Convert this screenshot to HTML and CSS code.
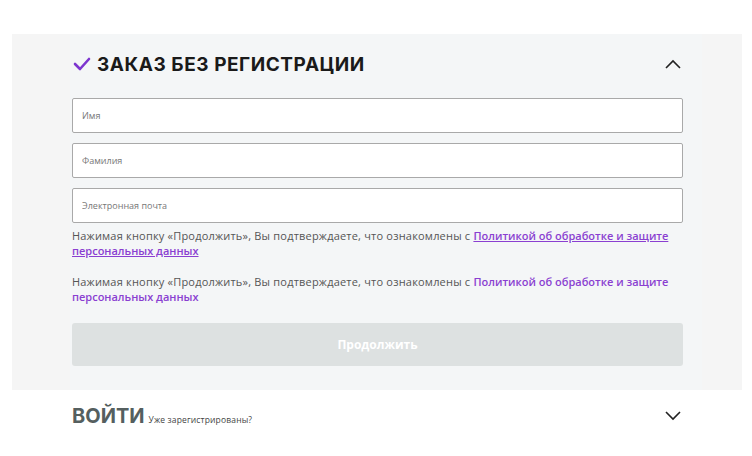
FILE: index.html
```html
<!DOCTYPE html>
<html lang="ru">
<head>
    <meta charset="UTF-8">
    <meta name="viewport" content="width=device-width, initial-scale=1.0">
    <title>Оформление заказа</title>
    <link rel="stylesheet" href="styles.css">
</head>
<body>
    <div class="checkout">
        <div class="section-open">
            <div class="section-inner">
                <div class="section-head">
                    <div class="section-title">
                        <svg class="check" width="18" height="14" viewBox="0 0 18 14">
                            <polyline points="2,7 7,12 16,2" fill="none" stroke="#7d35cf" stroke-width="2.6" stroke-linecap="round" stroke-linejoin="round"/>
                        </svg>
                        <span>ЗАКАЗ БЕЗ РЕГИСТРАЦИИ</span>
                    </div>
                    <svg class="chevron" width="16" height="10" viewBox="0 0 16 10">
                        <polyline points="1,9 8,2 15,9" fill="none" stroke="#222" stroke-width="1.6"/>
                    </svg>
                </div>

                <form class="guest-form">
                    <input type="text" placeholder="Имя">
                    <input type="text" placeholder="Фамилия">
                    <input type="email" placeholder="Электронная почта">

                    <p class="agree">Нажимая кнопку «Продолжить», Вы подтверждаете, что ознакомлены с <a href="#" class="underline">Политикой об обработке и защите персональных данных</a></p>
                    <p class="agree">Нажимая кнопку «Продолжить», Вы подтверждаете, что ознакомлены с <a href="#">Политикой об обработке и защите персональных данных</a></p>

                    <button type="button" class="btn-continue" disabled>Продолжить</button>
                </form>
            </div>
        </div>

        <div class="section-closed">
            <div class="login-title">
                <span class="login-big">ВОЙТИ</span>
                <span class="login-small">Уже зарегистрированы?</span>
            </div>
            <svg class="chevron" width="16" height="10" viewBox="0 0 16 10">
                <polyline points="1,1 8,8 15,1" fill="none" stroke="#222" stroke-width="1.6"/>
            </svg>
        </div>
    </div>
</body>
</html>
```

FILE: styles.css
```css
body {
    margin: 0;
    background-color: #fff;
    font-family: "Open Sans", "Liberation Sans", sans-serif;
    color: #555;
}

.checkout {
    padding-top: 34px;
}

.section-open {
    margin-left: 12px;
    width: 730px;
    background-color: #f5f5f5;
}

.section-inner {
    margin-left: 58px;
    width: 630px;
    padding: 16px 0 24px 2px;
    background-color: #f4f6f7;
}

.section-head {
    display: flex;
    justify-content: space-between;
    align-items: center;
    width: 611px;
    height: 28px;
    margin-bottom: 20px;
}

.section-title {
    display: flex;
    align-items: center;
    gap: 6px;
    font-family: "Inter", sans-serif;
    font-weight: 700;
    font-size: 19px;
    letter-spacing: 0.55px;
    color: #1a1a1a;
}

.check {
    margin-left: 1px;
}

.chevron {
    margin-right: 2px;
}

.guest-form {
    width: 611px;
    display: flex;
    flex-direction: column;
}

.guest-form input {
    height: 35px;
    margin-bottom: 10px;
    padding: 0 9px;
    border: 1px solid #a9a9a9;
    border-radius: 2px;
    background-color: #fff;
    font-family: "Open Sans", sans-serif;
    font-size: 9px;
    box-sizing: border-box;
}

.guest-form input:last-of-type {
    margin-bottom: 5px;
}

.guest-form input::placeholder {
    color: #777;
}

.agree {
    margin: 0 0 16px 0;
    font-size: 11px;
    line-height: 15px;
    letter-spacing: 0.2px;
    color: #555;
}

.agree a {
    color: #8a3fd1;
    font-weight: 600;
    letter-spacing: 0;
    text-decoration: none;
}

.agree a.underline {
    text-decoration: underline;
}

.btn-continue {
    height: 43px;
    margin-top: 3px;
    border: none;
    border-radius: 3px;
    background-color: #dde1e1;
    color: #fff;
    font-family: "Open Sans", sans-serif;
    font-weight: 700;
    font-size: 12px;
}

.section-closed {
    display: flex;
    justify-content: space-between;
    align-items: center;
    margin-left: 72px;
    width: 611px;
    height: 52px;
}

.login-title {
    display: flex;
    align-items: baseline;
    gap: 4px;
}

.login-big {
    font-family: "Inter", sans-serif;
    font-weight: 700;
    font-size: 20px;
    color: #555f5f;
}

.login-small {
    font-size: 8.5px;
    letter-spacing: 0.15px;
    color: #444;
}
```
